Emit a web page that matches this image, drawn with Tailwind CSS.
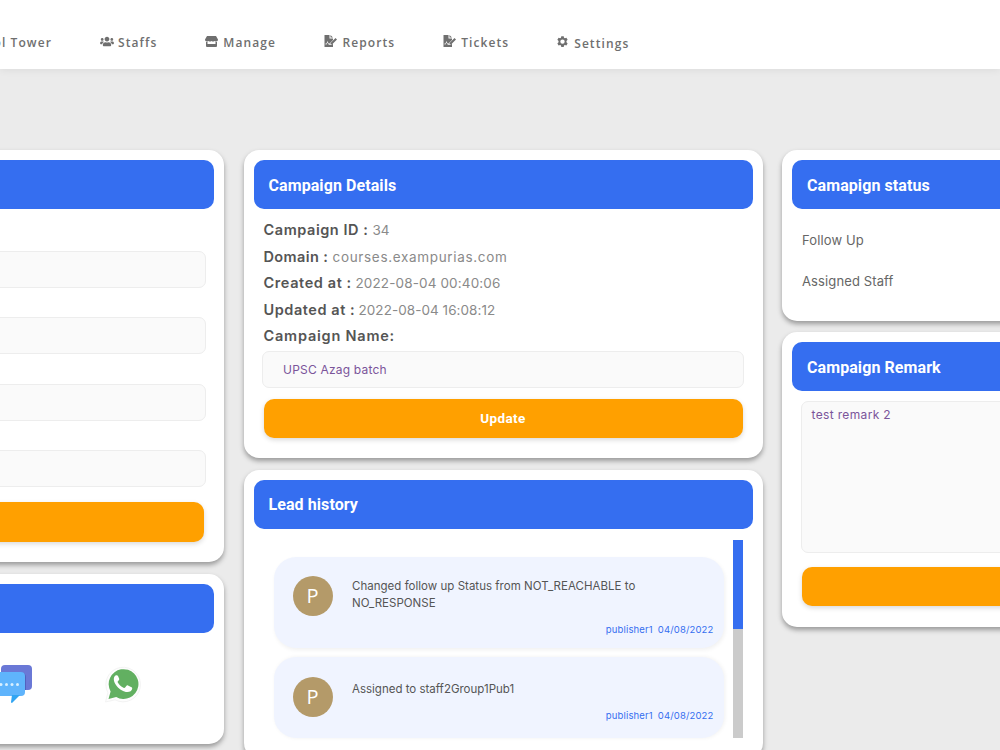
<!DOCTYPE html>
<html lang="en">
<head>
    <meta charset="UTF-8">
    <meta name="viewport" content="width=device-width, initial-scale=1.0">
    <title>Campaign Details</title>
    <script src="https://cdn.jsdelivr.net/npm/@tailwindcss/browser@4"></script>
</head>
<body class="h-[750px] w-[1000px] overflow-hidden bg-[#ebebeb] font-['Inter',sans-serif] text-[#555]">
    <!-- Top navigation -->
    <nav class="flex h-[69px] items-start gap-[48px] bg-white pt-[34px] font-['Open_Sans',sans-serif] text-[12px] leading-[18px] font-semibold tracking-[1.080px] text-[#6f6f6f] shadow-[0_1px_8px_rgba(0,0,0,0.07)]">
        <a class="flex w-[52px] justify-end whitespace-nowrap">Control Tower</a>
        <a class="flex h-[18px] gap-[4px]">
            <svg class="mt-[2px] h-[11px] w-[14px]" viewBox="0 0 640 512" fill="currentColor"><path d="M96 224c35 0 64-29 64-64s-29-64-64-64-64 29-64 64 29 64 64 64zm448 0c35 0 64-29 64-64s-29-64-64-64-64 29-64 64 29 64 64 64zm32 32h-64c-18 0-34 7-45 19 40 22 69 62 75 109h66c18 0 32-14 32-32v-32c0-35-29-64-64-64zm-256 0c62 0 112-50 112-112S382 32 320 32 208 82 208 144s50 112 112 112zm77 32h-8c-21 10-44 16-69 16s-48-6-69-16h-8c-64 0-115 52-115 115v29c0 27 21 48 48 48h288c27 0 48-21 48-48v-29c0-63-51-115-115-115zm-224-13c-11-12-27-19-45-19H64c-35 0-64 29-64 64v32c0 18 14 32 32 32h66c6-47 35-87 75-109z"/></svg>
            <span>Staffs</span>
        </a>
        <a class="flex h-[18px] gap-[5px]">
            <svg class="mt-[2px] h-[11px] w-[13px]" viewBox="0 0 26 22" fill="currentColor"><path d="M4 0h18l4 7c0 3-2 4-4 4s-3-1-3-1-1 1-3 1-3-1-3-1-1 1-3 1-3-1-3-1-1 1-3 1-4-1-4-4z"/><path d="M2 12h3v4h16v-4h3v8q0 2-2 2H4q-2 0-2-2z"/></svg>
            <span>Manage</span>
        </a>
        <a class="ml-[0.500px] flex h-[18px] gap-[5px]">
            <svg class="mt-[1px] h-[12px] w-[13px]" viewBox="0 0 26 24" fill="currentColor"><path fill-rule="evenodd" d="M1 0h10v7h7v3l-7 7v3h4l3-3v7H1zM3 19h2l2-4 2 4h2v-2H9l-2-5-2 5H3z"/><path d="M13 0l5 5h-5zM23 6l3 3-10 10h-3v-3z"/></svg>
            <span>Reports</span>
        </a>
        <a class="flex h-[18px] gap-[5px]">
            <svg class="mt-[1px] h-[12px] w-[13px]" viewBox="0 0 26 24" fill="currentColor"><path fill-rule="evenodd" d="M1 0h10v7h7v3l-7 7v3h4l3-3v7H1zM3 19h2l2-4 2 4h2v-2H9l-2-5-2 5H3z"/><path d="M13 0l5 5h-5zM23 6l3 3-10 10h-3v-3z"/></svg>
            <span>Tickets</span>
        </a>
        <a class="flex h-[18px] gap-[6px]">
            <svg class="mt-[2px] h-[11px] w-[11px]" viewBox="1 0.500 22 22.500" fill="currentColor"><path fill-rule="evenodd" d="M9.500 1h5l.6 3.200 1.800 1 3.100-1 2.500 4.200-2.400 2.200v2.800l2.400 2.200-2.500 4.200-3.100-1-1.800 1-.6 3.200h-5l-.6-3.200-1.800-1-3.100 1-2.500-4.200 2.400-2.200v-2.800L1.500 8.400 4 4.200l3.100 1 1.800-1zM12 7.500a4.500 4.500 0 1 0 0 9 4.500 4.500 0 0 0 0-9z"/></svg>
            <span class="mt-px">Settings</span>
        </a>
    </nav>

    <!-- Three columns, the outer two run past the window -->
    <main class="-ml-[295px] flex w-[1596px] gap-[19.500px] pt-[81px]">
        <section class="flex w-[519px] flex-col gap-[12px]">
            <div class="h-[412px] rounded-[15px] bg-white p-[10px] shadow-[0_3px_5px_rgba(0,0,0,0.35)]">
                <div class="h-[49px] rounded-[10px] bg-[#356ef0]"></div>
                <div class="mt-[41.500px] mr-[8px] flex flex-col gap-[29.500px]">
                    <div class="h-[37px] rounded-[7px] border border-[#ededed] bg-[#fafafa]"></div>
                    <div class="h-[37px] rounded-[7px] border border-[#ededed] bg-[#fafafa]"></div>
                    <div class="h-[37px] rounded-[7px] border border-[#ededed] bg-[#fafafa]"></div>
                    <div class="h-[37px] rounded-[7px] border border-[#ededed] bg-[#fafafa]"></div>
                </div>
                <div class="mt-[15px] mr-[10px] h-[39.500px] rounded-[10px] bg-[#ffa000] shadow-[0_2px_5px_rgba(0,0,0,0.15)]"></div>
            </div>
            <div class="h-[170px] rounded-[15px] bg-white p-[10px] shadow-[0_3px_5px_rgba(0,0,0,0.35)]">
                <div class="h-[49px] rounded-[10px] bg-[#356ef0]"></div>
                <div class="mt-[30px] mr-[72px] flex justify-end gap-[71px]">
                    <svg class="mt-px h-[42px] w-[42px]" viewBox="0 0 42 42">
                        <rect x="10" y="1" width="31" height="25" rx="4" fill="#6a78d6"/>
                        <path d="M30 8q5 1 5 5v13h-5z" fill="#5261be"/>
                        <rect x="2" y="8" width="32" height="24" rx="4" fill="#5fb4fc"/>
                        <path d="M21 31h8l-8 8q-1 0-1-1z" fill="#32a5f2"/>
                        <g fill="#d8f0ff"><circle cx="10" cy="20.500" r="1.500"/><circle cx="15.500" cy="20.500" r="1.500"/><circle cx="21" cy="20.500" r="1.500"/><circle cx="26.500" cy="20.500" r="1.500"/></g>
                    </svg>
                    <svg class="mt-[2px] h-[38px] w-[38px]" viewBox="0 0 38 38">
                        <path d="M1.500 37l2.400-9.300A17.300 17.300 0 1 1 11 34.800z" fill="#fdfdfd" stroke="#f0f0f0" stroke-width=".8"/>
                        <path d="M4.500 34l2.100-7.600A14.900 14.900 0 1 1 12.200 32z" fill="#62b061"/>
                        <path d="M14 11c-.6-1.200-2.600-.9-3.500.5-3.200 5.500 5.500 15.500 12.800 15.500 2.500 0 4.700-1.300 4.900-3.300.1-1-.4-1.300-1.200-1.700l-3-1.500c-.8-.4-1.200-.2-1.700.5l-1.200 1.500c-.4.500-.9.500-1.600.2-2.500-1.100-4.500-3-5.700-5.200-.3-.6-.1-.9.300-1.400.8-1 1.400-1.600 1.100-2.400z" fill="#fff"/>
                    </svg>
                </div>
            </div>
        </section>

        <section class="flex w-[519px] flex-col gap-[12px]">
            <div class="h-[308px] rounded-[15px] bg-white p-[10px] shadow-[0_3px_5px_rgba(0,0,0,0.35)]">
                <h2 class="flex h-[49px] items-center rounded-[10px] bg-[#356ef0] px-[15px] pt-[2px] font-['Roboto',sans-serif] text-[16px] font-bold tracking-[0.080px] text-white">Campaign Details</h2>
                <div class="mt-[8px] ml-[10px] text-[13.500px] leading-[26.600px] whitespace-nowrap text-[#8a8a8a]">
                    <p class="flex gap-[4px]"><b class="w-[105px] text-[14.500px] font-semibold tracking-[0.560px] text-[#555]">Campaign ID :</b><span>34</span></p>
                    <p class="flex gap-[4px]"><b class="w-[65px] text-[14.500px] font-semibold tracking-[0.400px] text-[#555]">Domain :</b><span class="tracking-[0.670px]">courses.exampurias.com</span></p>
                    <p class="flex gap-[4px]"><b class="w-[88px] text-[14.500px] font-semibold tracking-[0.600px] text-[#555]">Created at :</b><span class="tracking-[0.130px]">2022-08-04 00:40:06</span></p>
                    <p class="flex gap-[4px]"><b class="w-[91px] text-[14.500px] font-semibold tracking-[0.560px] text-[#555]">Updated at :</b><span class="tracking-[0.050px]">2022-08-04 16:08:12</span></p>
                    <p><b class="text-[14.500px] font-semibold tracking-[0.780px] text-[#555]">Campaign Name:</b></p>
                </div>
                <div class="mx-[8.500px] mt-px flex h-[37px] items-center rounded-[7px] border border-[#ededed] bg-[#fafafa] px-[20px] pt-px text-[12px] tracking-[0.200px] text-[#7b559a]">UPSC Azag batch</div>
                <div class="mx-[10px] mt-[11px] flex h-[39px] items-center justify-center rounded-[10px] bg-[#ffa000] font-['Roboto',sans-serif] text-[13.500px] font-bold tracking-[0.400px] text-white shadow-[0_2px_5px_rgba(0,0,0,0.15)]">Update</div>
            </div>

            <div class="h-[288px] shrink-0 rounded-[15px] bg-white p-[10px] shadow-[0_3px_5px_rgba(0,0,0,0.35)]">
                <h2 class="flex h-[49px] items-center rounded-[10px] bg-[#356ef0] px-[15px] font-['Roboto',sans-serif] text-[16px] font-bold tracking-[0.080px] text-white">Lead history</h2>
                <div class="mt-[11px] mr-[10px] ml-[20px] flex h-[198px] justify-between">
                    <div class="flex w-[450px] flex-col gap-[9px] pt-[17px]">
                        <div class="flex h-[91px] gap-[19.500px] rounded-[22px] bg-[#f0f4ff] pt-[19px] pr-[10px] pl-[19px] shadow-[1px_2px_4px_rgba(0,0,0,0.06)]">
                            <div class="flex size-[40px] shrink-0 items-center justify-center rounded-full bg-[#b49a69] font-['Open_Sans',sans-serif] text-[20px] text-white">P</div>
                            <div class="flex h-[61px] grow flex-col justify-between pt-[2px] text-[11.500px] leading-[17px] tracking-[0.020px] whitespace-nowrap text-[#555]">
                                <p>Changed follow up Status from NOT_REACHABLE to<br>NO_RESPONSE</p>
                                <p class="flex justify-end gap-[5px] text-[9.500px] leading-[14px] tracking-[0.150px] text-[#356ef0]"><span>publisher1</span><span>04/08/2022</span></p>
                            </div>
                        </div>
                        <div class="flex h-[81px] gap-[19.500px] rounded-[22px] bg-[#f0f4ff] pt-[20px] pr-[10px] pl-[19px] shadow-[1px_0_4px_rgba(0,0,0,0.06)]">
                            <div class="flex size-[40px] shrink-0 items-center justify-center rounded-full bg-[#b49a69] font-['Open_Sans',sans-serif] text-[20px] text-white">P</div>
                            <div class="flex h-[46px] grow flex-col justify-between pt-[3.500px] text-[11.500px] leading-[17px] tracking-[0px] whitespace-nowrap text-[#555]">
                                <p>Assigned to staff2Group1Pub1</p>
                                <p class="flex justify-end gap-[5px] text-[9.500px] leading-[14px] tracking-[0.150px] text-[#356ef0]"><span>publisher1</span><span>04/08/2022</span></p>
                            </div>
                        </div>
                    </div>
                    <div class="w-[10px] bg-[#cbcbcb]"><div class="h-[89px] bg-[#356ef0]"></div></div>
                </div>
            </div>
        </section>

        <section class="flex w-[519px] flex-col gap-[11px]">
            <div class="h-[171px] rounded-[15px] bg-white p-[10px] shadow-[0_3px_5px_rgba(0,0,0,0.35)]">
                <h2 class="flex h-[49px] items-center rounded-[10px] bg-[#356ef0] px-[15px] pt-[2px] font-['Roboto',sans-serif] text-[16px] font-bold tracking-[0.080px] text-white">Camapign status</h2>
                <div class="mt-[21px] ml-[10px] flex flex-col gap-[21px] text-[13px] leading-[20px] tracking-[0.120px] text-[#666]">
                    <p>Follow Up</p>
                    <p>Assigned Staff</p>
                </div>
            </div>
            <div class="h-[295px] rounded-[15px] bg-white p-[10px] shadow-[0_3px_5px_rgba(0,0,0,0.35)]">
                <h2 class="flex h-[49px] items-center rounded-[10px] bg-[#356ef0] px-[15px] pt-[2px] font-['Roboto',sans-serif] text-[16px] font-bold tracking-[0.080px] text-white">Campaign Remark</h2>
                <div class="mx-[8.500px] mt-[10px] h-[152px] rounded-[7px] border border-[#ededed] bg-[#fafafa] px-[10px] pt-[4px] text-[12px] leading-[17px] tracking-[0.350px] text-[#7b559a]">test remark 2</div>
                <div class="mx-[10px] mt-[14px] h-[39px] rounded-[10px] bg-[#ffa000] shadow-[0_2px_5px_rgba(0,0,0,0.15)]"></div>
            </div>
        </section>
    </main>
</body>
</html>
